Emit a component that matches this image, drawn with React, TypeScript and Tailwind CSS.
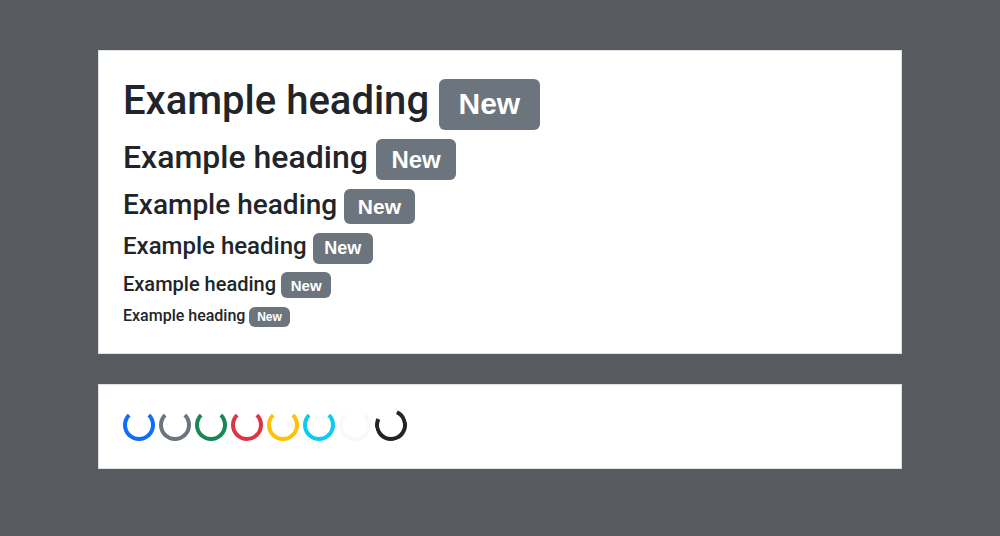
import React from "react";

const headings = [
  { cls: "text-[40px]", Tag: "h1" },
  { cls: "text-[32px]", Tag: "h2" },
  { cls: "text-[28px]", Tag: "h3" },
  { cls: "text-[24px]", Tag: "h4" },
  { cls: "text-[20px]", Tag: "h5" },
  { cls: "text-[16px]", Tag: "h6" },
] as const;

const spinners = [
  { c: "text-[#0d6efd]", r: "-rotate-90" },
  { c: "text-[#6c757d]", r: "-rotate-90" },
  { c: "text-[#198754]", r: "-rotate-90" },
  { c: "text-[#dc3545]", r: "-rotate-90" },
  { c: "text-[#ffc107]", r: "-rotate-90" },
  { c: "text-[#0dcaf0]", r: "-rotate-90" },
  { c: "text-[#f8f9fa]", r: "-rotate-90" },
  { c: "text-[#212529]", r: "rotate-[-110deg]" },
];

export default function App() {
  return (
    <div
      className="min-h-[536px] w-full bg-[#575a5e] pt-[50px]"
      style={{ fontFamily: "Roboto, 'Noto Sans', sans-serif" }}
    >
      <div className="mx-auto w-[804px] border border-[#dee2e6] bg-white px-6 pb-[18px] pt-[26px]">
        {headings.map(({ cls, Tag }, i) => (
          <Tag
            key={i}
            className={`${cls} mb-2 font-medium leading-[1.2] text-[#212529]`}
          >
            Example heading{" "}
            <span className="inline-block rounded-[0.375rem] bg-[#6c757d] px-[0.65em] py-[0.35em] align-baseline font-['Liberation_Sans',Arial,sans-serif] text-[0.75em] font-bold leading-none text-white">
              New
            </span>
          </Tag>
        ))}
      </div>
      <div className="mx-auto mt-[30px] flex w-[804px] gap-1 border border-[#dee2e6] bg-white px-6 pb-[27px] pt-6">
        {spinners.map((s, i) => (
          <div
            key={i}
            className={`h-8 w-8 rounded-full border-4 border-solid border-current border-r-transparent ${s.c} ${s.r}`}
          />
        ))}
      </div>
    </div>
  );
}
